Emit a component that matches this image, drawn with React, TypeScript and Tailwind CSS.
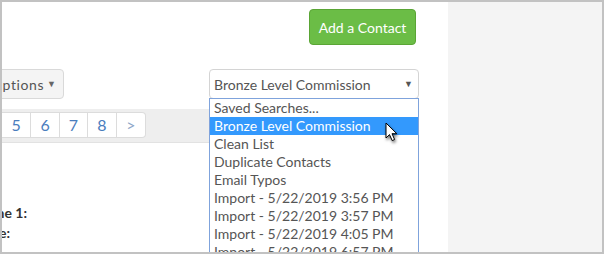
import React from "react";

const items = [
  "Saved Searches...",
  "Bronze Level Commission",
  "Clean List",
  "Duplicate Contacts",
  "Email Typos",
  "Import - 5/22/2019 3:56 PM",
  "Import - 5/22/2019 3:57 PM",
  "Import - 5/22/2019 4:05 PM",
  "Import - 5/22/2019 6:57 PM",
];

function Cursor() {
  return (
    <svg width="16" height="22" viewBox="0 0 16 22" className="absolute left-[175px] top-[23px] drop-shadow-[1px_2px_1.5px_rgba(0,0,0,0.55)]">
      <path d="M1 1 L1 16 L4.5 12.6 L7.2 18.6 L9.6 17.5 L7 11.7 L11.8 11.7 Z" fill="#fff" stroke="#000" strokeWidth="1" strokeLinejoin="miter" />
    </svg>
  );
}

export default function App() {
  return (
    <div className="w-[604px] h-[254px] border-2 border-[#c2c2c2] flex overflow-hidden bg-white" style={{ fontFamily: "Lato, 'Open Sans', sans-serif" }}>
      <div className="w-[446px] h-full bg-white relative flex flex-col overflow-hidden">
        <div className="flex justify-end pr-[32px] mt-[7px]">
          <button className="h-[36px] w-[107px] rounded-[4px] bg-[#6bbd46] border border-[#5aa535] text-white text-[14px]">
            Add a Contact
          </button>
        </div>
        <div className="flex justify-between items-start mt-[24px] pr-[29px]">
          <div className="ml-[-40px] h-[30px] w-[102px] rounded-[4px] bg-[#f4f4f4] border border-[#d9d9d9] flex items-center justify-end pr-[7px] text-[14px] text-[#555]">
            <span className="tracking-[0.6px]">Options</span>
            <span className="ml-[3px] text-[9px] text-[#666]">▼</span>
          </div>
          <div className="h-[30px] w-[210px] rounded-[4px] bg-white border border-[#d4d4d4] flex items-center justify-between pl-[4px] pr-[5px] text-[14px] text-[#555]">
            <span>Bronze Level Commission</span>
            <span className="text-[9px] text-[#555]">▼</span>
          </div>
        </div>
        <div className="mt-[10px] h-[34px] w-[417px] bg-[#eeeeee] border-b border-[#e2e2e2] pt-[3px]">
          <div className="flex h-[26px] w-[144px] bg-white border border-[#dcdcdc] border-l-0 rounded-r-[4px] text-[16px]">
            {["5", "6", "7", "8", ">"].map((t, i) => (
              <div
                key={t}
                className={`w-[29px] flex items-center justify-center ${i < 4 ? "border-r border-[#dcdcdc] text-[#4a7dbd]" : "text-[#8ea6c8]"} ${i === 0 ? "w-[30px]" : ""}`}
              >
                {t}
              </div>
            ))}
          </div>
        </div>
        <div className="mt-[60px] flex flex-col text-[14px] font-bold text-[#333]">
          <div className="ml-[-55px] w-[80px] text-right leading-[20px]">Phone 1:</div>
          <div className="ml-[-72px] w-[80px] text-right leading-[20px]">Type:</div>
        </div>
        <div className="absolute left-[207px] top-[96px] w-[210px] h-[170px] bg-white border border-[#7fa3dc] text-[14px] text-[#555] leading-[18px]">
          {items.map((t, i) => (
            <div key={t} className={`h-[18px] pl-[4px] ${i === 1 ? "bg-[#3399fd] text-white" : ""}`}>
              {t}
            </div>
          ))}
          <Cursor />
        </div>
      </div>
      <div className="flex-1 h-full bg-[#f4f4f4]" />
    </div>
  );
}
